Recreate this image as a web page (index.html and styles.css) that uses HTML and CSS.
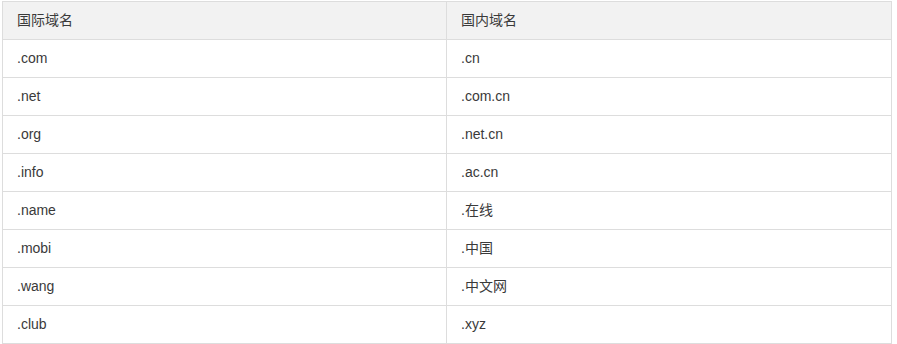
FILE: index.html
```html
<!DOCTYPE html>
<html lang="zh-CN">
<head>
<meta charset="utf-8">
<title>域名</title>
<link rel="stylesheet" href="styles.css">
</head>
<body>
<table class="domain-table">
  <colgroup><col class="col-a"><col class="col-b"></colgroup>
  <thead>
    <tr><th>国际域名</th><th>国内域名</th></tr>
  </thead>
  <tbody>
    <tr><td>.com</td><td>.cn</td></tr>
    <tr><td>.net</td><td>.com.cn</td></tr>
    <tr><td>.org</td><td>.net.cn</td></tr>
    <tr><td>.info</td><td>.ac.cn</td></tr>
    <tr><td>.name</td><td>.在线</td></tr>
    <tr><td>.mobi</td><td>.中国</td></tr>
    <tr><td>.wang</td><td>.中文网</td></tr>
    <tr><td>.club</td><td>.xyz</td></tr>
  </tbody>
</table>
</body>
</html>
```
FILE: styles.css
```css
html, body {
  margin: 0;
  padding: 0;
  background: #fff;
}
body {
  font-family: "Liberation Sans", Arial, "Noto Sans CJK SC", sans-serif;
  font-size: 14px;
  color: #3a3a3a;
}
.domain-table {
  margin: 1px 0 0 2px;
  width: 890px;
  border-collapse: collapse;
  table-layout: fixed;
}
.col-a { width: 444px; }
.domain-table th,
.domain-table td {
  border: 1px solid #ddd;
  padding: 8px 14px;
  line-height: 21px;
  height: 21px;
  text-align: left;
  font-weight: normal;
}
.domain-table th {
  background: #f2f2f2;
}
```
